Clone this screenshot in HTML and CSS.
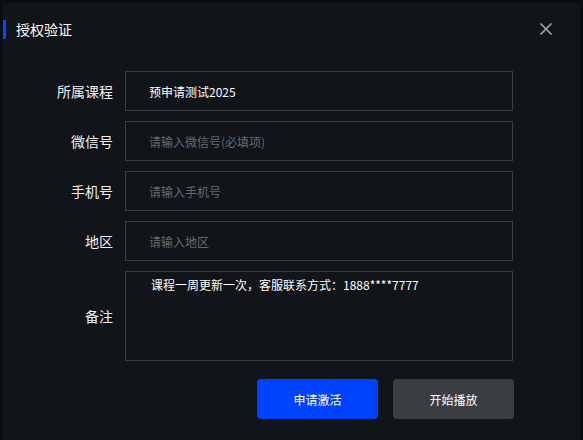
FILE: index.html
```html
<!DOCTYPE html>
<html lang="zh-CN">
<head>
    <meta charset="UTF-8">
    <meta name="viewport" content="width=device-width, initial-scale=1.0">
    <title>授权验证</title>
    <link rel="stylesheet" href="styles.css">
</head>
<body>
    <div class="dialog">
        <div class="dialog-header">
            <span class="accent"></span>
            <h2 class="dialog-title">授权验证</h2>
            <button class="close" aria-label="关闭">
                <svg width="12" height="12" viewBox="0 0 12 12">
                    <path d="M1 1 L11 11 M11 1 L1 11" stroke="#a3a7ad" stroke-width="1.7" stroke-linecap="round"/>
                </svg>
            </button>
        </div>

        <form class="form">
            <div class="form-row">
                <label for="course">所属课程</label>
                <input type="text" id="course" value="预申请测试2025">
            </div>
            <div class="form-row">
                <label for="wechat">微信号</label>
                <input type="text" id="wechat" placeholder="请输入微信号(必填项)">
            </div>
            <div class="form-row">
                <label for="phone">手机号</label>
                <input type="text" id="phone" placeholder="请输入手机号">
            </div>
            <div class="form-row">
                <label for="area">地区</label>
                <input type="text" id="area" placeholder="请输入地区">
            </div>
            <div class="form-row">
                <label for="remark">备注</label>
                <textarea id="remark">课程一周更新一次，客服联系方式：1888****7777</textarea>
            </div>

            <div class="actions">
                <button type="button" class="btn primary">申请激活</button>
                <button type="button" class="btn secondary">开始播放</button>
            </div>
        </form>
    </div>
</body>
</html>
```

FILE: styles.css
```css
body {
    margin: 0;
    background-color: #0b0e11;
    font-family: "Noto Sans CJK SC", "Noto Sans", sans-serif;
    color: #fff;
}
.dialog {
    margin: 3px 3px 0;
    min-height: calc(100vh - 3px);
    background-color: #111418;
}
.dialog-header {
    display: flex;
    align-items: center;
    height: 52px;
    padding-right: 28px;
}
.accent {
    width: 3px;
    height: 19px;
    background-color: #0a46ff;
}
.dialog-title {
    flex: 1;
    margin: 0 0 0 10px;
    font-size: 14px;
    font-weight: normal;
    color: #fff;
}
.close {
    display: flex;
    padding: 0;
    border: none;
    background: none;
    cursor: pointer;
}
.form {
    display: flex;
    flex-direction: column;
    gap: 10px;
    padding: 16px 67px 0 0;
}
.form-row {
    display: grid;
    grid-template-columns: 110px 1fr;
    column-gap: 12px;
    align-items: center;
}
.form-row label {
    text-align: right;
    font-size: 14px;
    color: #f2f2f2;
}
.form-row input, .form-row textarea {
    box-sizing: border-box;
    width: 100%;
    margin: 0;
    border: 1px solid #3a3d42;
    background-color: #111418;
    color: #fff;
    font-family: inherit;
    font-size: 12px;
    outline: none;
}
.form-row input {
    height: 40px;
    padding: 0 23px;
}
.form-row textarea {
    height: 90px;
    padding: 4px 25px;
    line-height: 18px;
    resize: none;
}
.form-row input::placeholder {
    color: #676b71;
}
.actions {
    display: flex;
    justify-content: flex-end;
    gap: 15px;
    margin: 8px -1px 0 0;
}
.btn {
    width: 121px;
    height: 40px;
    border: none;
    border-radius: 4px;
    color: #fff;
    font-family: inherit;
    font-size: 12px;
    cursor: pointer;
}
.btn.primary {
    background-color: #0043ff;
}
.btn.secondary {
    background-color: #3a3d42;
}
```
